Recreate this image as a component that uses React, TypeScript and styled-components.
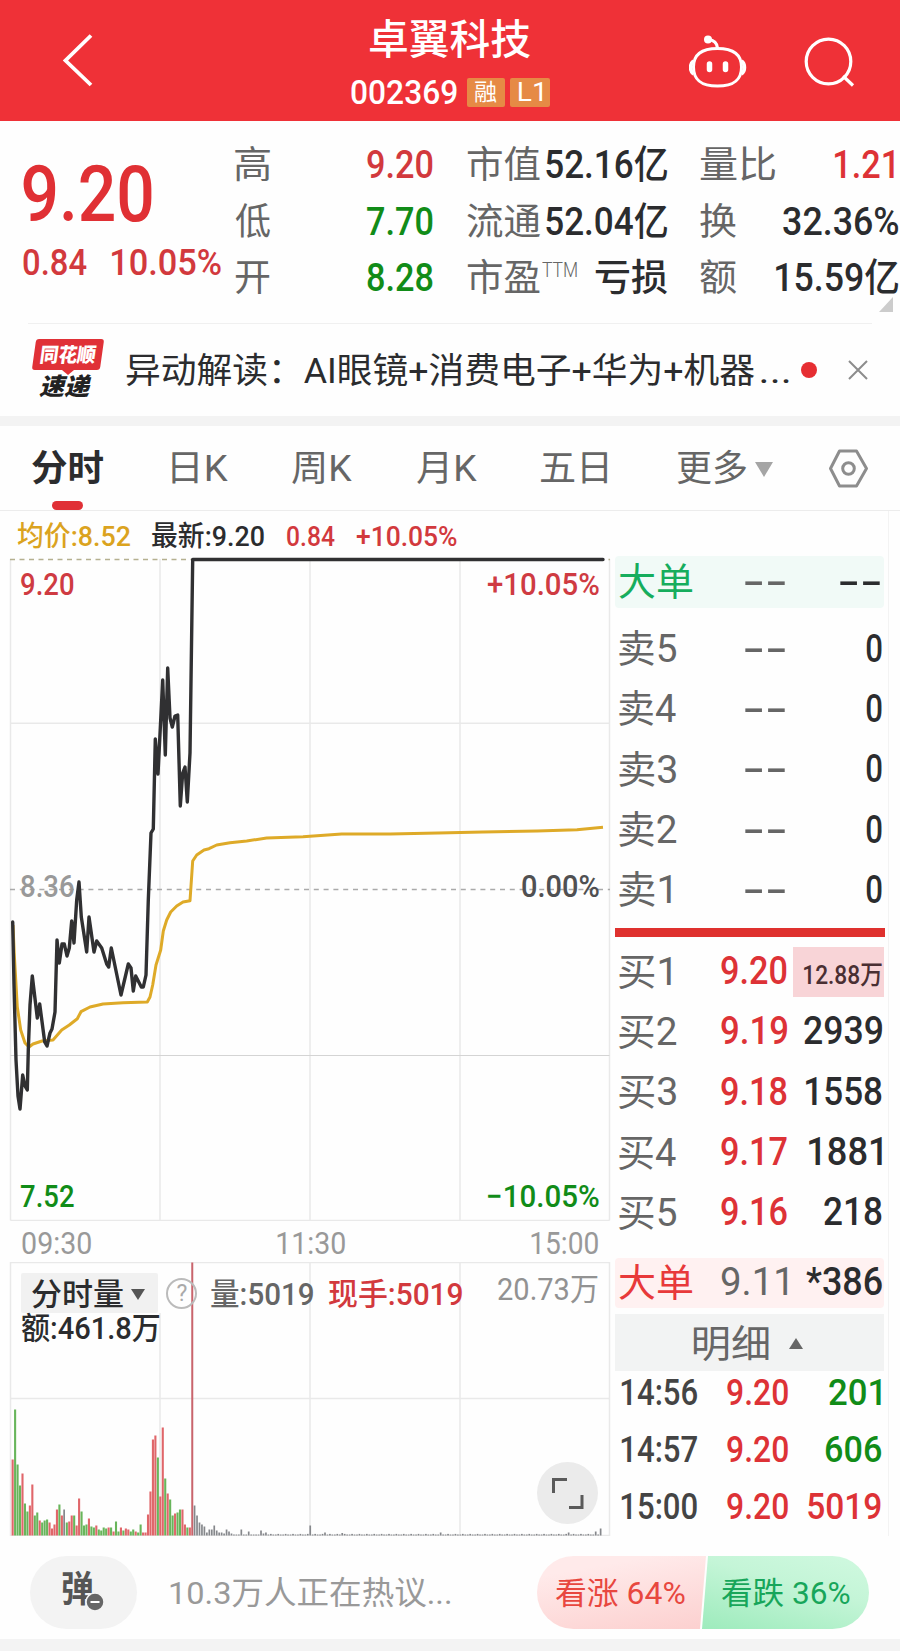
import React, { useLayoutEffect, useRef, useState } from 'react';
import styled, { createGlobalStyle } from 'styled-components';

const RED = '#dd3236';
const GREEN = '#118c18';
const DARK = '#2b2c2e';
const GREY = '#666';
const SOFT = '#999';

const GlobalStyle = createGlobalStyle`
  * { box-sizing: border-box; }
  body { margin: 0; background: #fff; }
`;

/* ---------- text that is condensed or widened to a given ink width ---------- */

const FitBox = styled.span<{ $w: number; $size: number; $weight: number; $color: string; $family?: string; $italic?: boolean }>`
  display: block;
  flex: none;
  width: ${p => p.$w}px;
  height: ${p => p.$size}px;
  line-height: ${p => p.$size}px;
  font-family: ${p => p.$family ?? "Roboto, 'Noto Sans CJK SC', sans-serif"};
  font-size: ${p => p.$size}px;
  font-weight: ${p => p.$weight};
  font-style: ${p => (p.$italic ? 'italic' : 'normal')};
  color: ${p => p.$color};
  white-space: nowrap;
`;

const FitInner = styled.span`
  display: inline-block;
  transform-origin: 0 50%;
`;

interface FitProps {
  children: string;
  w: number;
  size: number;
  weight?: number;
  color?: string;
  family?: string;
  italic?: boolean;
}

function Fit({ children, w, size, weight = 400, color = DARK, family, italic }: FitProps) {
  const ref = useRef<HTMLSpanElement>(null);
  const [transform, setTransform] = useState('none');
  useLayoutEffect(() => {
    const ctx = document.createElement('canvas').getContext('2d');
    if (!ctx || !ref.current) return;
    const cs = getComputedStyle(ref.current);
    ctx.font = `${cs.fontStyle} ${cs.fontWeight} ${cs.fontSize} ${cs.fontFamily}`;
    const m = ctx.measureText(children);
    const k = w / (m.actualBoundingBoxLeft + m.actualBoundingBoxRight);
    setTransform(`translateX(${m.actualBoundingBoxLeft * k}px) scaleX(${k})`);
  }, [children, w]);
  return (
    <FitBox $w={w} $size={size} $weight={weight} $color={color} $family={family} $italic={italic}>
      <FitInner ref={ref} style={{ transform }}>{children}</FitInner>
    </FitBox>
  );
}

const DashWrap = styled.span`
  display: block;
  padding: 0 2px 5px 0;
`;

const Dashes = ({ color = GREY }: { color?: string }) => (
  <DashWrap><Fit w={40} size={44} color={color} family="'DejaVu Sans', sans-serif">--</Fit></DashWrap>
);

/* ---------- header ---------- */

const Page = styled.main`
  width: 900px;
  height: 1651px;
  overflow: hidden;
  background: #fefefe;
  display: flex;
  flex-direction: column;
`;

const Header = styled.header`
  height: 121px;
  flex: none;
  background: #ef3137;
  display: grid;
  grid-template-columns: 350px 202px 137px 57px 75px 79px;
  align-items: start;
`;

const BackIcon = styled.svg`
  margin: 30px 0 0 60px;
`;
const TitleCol = styled.div`
  display: flex;
  flex-direction: column;
  padding-top: 20px;
`;
const TitleLine = styled.div`
  padding-left: 20px;
`;
const CodeLine = styled.div`
  display: flex;
  align-items: center;
  height: 28px;
  margin-top: 17px;
  padding-left: 1px;
`;
const Tag = styled.span<{ $w: number; $ml: number }>`
  width: ${p => p.$w}px;
  height: 29px;
  margin-left: ${p => p.$ml}px;
  border-radius: 2px;
  background: #e68a45;
  display: flex;
  align-items: center;
  justify-content: center;
`;

/* ---------- quote ---------- */

const Quote = styled.section`
  height: 202px;
  flex: none;
  display: flex;
  position: relative;
`;
const PriceCol = styled.div`
  width: 235px;
  padding: 35px 0 0 23px;
`;
const ChangeLine = styled.div`
  display: flex;
  gap: 25px;
  margin-top: 10px;
`;
const Metrics = styled.div<{ $w: number; $ml?: number }>`
  width: ${p => p.$w}px;
  margin-left: ${p => p.$ml ?? 0}px;
  padding-top: 16px;
  flex: none;
`;
const Metric = styled.div<{ $pr?: number }>`
  height: 56.7px;
  padding-right: ${p => p.$pr ?? 0}px;
  display: flex;
  align-items: center;
  justify-content: space-between;
`;
const LabelWrap = styled.span`
  display: flex;
  align-items: flex-start;
  gap: 2px;
`;
const Corner = styled.span`
  position: absolute;
  right: 7px;
  top: 176px;
  border-left: 14px solid transparent;
  border-bottom: 15px solid #ccc;
`;

/* ---------- news ---------- */

const News = styled.section`
  height: 93px;
  flex: none;
  margin: 0 28px;
  padding-left: 3px;
  border-top: 1px solid #f0f0f0;
  display: flex;
  align-items: center;
`;
const Logo = styled.div`
  width: 73px;
  height: 62px;
  display: flex;
  flex-direction: column;
  align-items: center;
`;
const LogoBubble = styled.div`
  width: 68px;
  height: 31px;
  background: #e03137;
  transform: skewX(-8deg);
  border-radius: 3px;
  display: flex;
  align-items: center;
  justify-content: center;
`;
const LogoTail = styled.i`
  border: 6px solid transparent;
  border-top: 5px solid #e03137;
  border-bottom: 0;
`;
const LogoCaption = styled.div`
  padding-right: 5px;
`;
const NewsText = styled.div`
  margin-left: 22px;
  padding-top: 2px;
  display: flex;
  gap: 6px;
`;
const Dot = styled.i`
  width: 16px;
  height: 16px;
  border-radius: 50%;
  background: #e62e32;
  margin: 0 31px 0 12px;
`;
const Band = styled.div<{ $h: number }>`
  height: ${p => p.$h}px;
  flex: none;
  background: #f3f3f3;
`;

/* ---------- tabs ---------- */

const Tabs = styled.nav`
  height: 85px;
  flex: none;
  border-bottom: 1px solid #ececec;
  display: flex;
  align-items: flex-start;
  padding-left: 32px;
`;
const Tab = styled.div<{ $ml?: number }>`
  height: 84px;
  padding-top: 25px;
  margin-left: ${p => p.$ml ?? 0}px;
  display: flex;
  flex-direction: column;
  align-items: center;
`;
const Underline = styled.i`
  width: 31px;
  height: 9px;
  margin-top: 14px;
  border-radius: 5px;
  background: #e03036;
`;
const Caret = styled.i<{ $w: number; $h: number; $color: string; $up?: boolean }>`
  flex: none;
  border-left: ${p => p.$w / 2}px solid transparent;
  border-right: ${p => p.$w / 2}px solid transparent;
  ${p => (p.$up ? 'border-bottom' : 'border-top')}: ${p => p.$h}px solid ${p => p.$color};
`;
const MoreTab = styled.div`
  height: 86px;
  margin-left: 70px;
  display: flex;
  align-items: center;
  gap: 9px;
`;
const HexIcon = styled.svg`
  margin: 21px 0 0 54px;
`;

/* ---------- body ---------- */

const Body = styled.section`
  height: 1025px;
  flex: none;
  display: flex;
`;
const Left = styled.div`
  width: 615px;
  flex: none;
`;
const Legend = styled.div`
  height: 46px;
  padding: 6px 0 0 17px;
  display: flex;
  align-items: center;
`;
const Gap = styled.i<{ $w: number }>`
  width: ${p => p.$w}px;
  flex: none;
`;
const ChartBox = styled.div<{ $h: number }>`
  position: relative;
  height: ${p => p.$h}px;
  svg { display: block; }
`;
const Mark = styled.div<{ $x: number; $y: number }>`
  position: absolute;
  left: ${p => p.$x}px;
  top: ${p => p.$y}px;
`;
const TimeAxis = styled.div`
  height: 41px;
  padding: 4px 17px 0 22px;
  display: flex;
  align-items: center;
  justify-content: space-between;
`;
const VolumeBar = styled.div`
  position: absolute;
  left: 21px;
  top: 11px;
  width: 577px;
  height: 40px;
  display: flex;
  align-items: center;
`;
const Picker = styled.div`
  width: 137px;
  height: 40px;
  padding: 2px 0 0 11px;
  background: #f1f1f1;
  border-radius: 2px;
  display: flex;
  align-items: center;
  gap: 8px;
  flex: none;
`;
const Help = styled.span`
  width: 31px;
  height: 31px;
  margin-left: 8px;
  border: 2px solid #bbb;
  border-radius: 50%;
  display: flex;
  align-items: center;
  justify-content: center;
`;
const VolumeTexts = styled.div`
  display: flex;
  gap: 16px;
  padding: 2px 0 0 14px;
`;
const Expand = styled.div`
  position: absolute;
  left: 537px;
  top: 200px;
  width: 61px;
  height: 62px;
  border-radius: 50%;
  background: #ebebeb;
  display: flex;
  align-items: center;
  justify-content: center;
`;

/* ---------- order book ---------- */

const Book = styled.aside`
  width: 274px;
  border-right: 1px solid #f3f3f3;
  padding-top: 45px;
`;
const BookRow = styled.div<{ $h: number; $bg?: string; $mt?: number }>`
  height: ${p => p.$h}px;
  width: 269px;
  margin-top: ${p => p.$mt ?? 0}px;
  padding-left: 4px;
  background: ${p => p.$bg ?? 'none'};
  border-radius: 4px;
  display: grid;
  grid-template-columns: 75px 93px 95px;
  align-items: center;
  justify-items: end;
  > :first-child { justify-self: start; }
`;
const TradeRow = styled(BookRow)`
  padding-left: 6px;
  grid-template-columns: 73px 94px 93px;
`;
const Divider = styled.div`
  width: 270px;
  height: 9px;
  margin: 8px 0 4px;
  background: #df312e;
`;
const BigQty = styled.div`
  width: 91px;
  height: 50px;
  margin-right: -2px;
  padding: 7px 2px 0 0;
  background: #f8d4d7;
  display: flex;
  align-items: center;
  justify-content: flex-end;
`;
const DetailHead = styled.div`
  width: 269px;
  height: 57px;
  margin-top: 6px;
  background: #f2f3f3;
  display: flex;
  align-items: center;
  padding: 3px 0 0 79px;
  gap: 20px;
`;

/* ---------- footer ---------- */

const Footer = styled.footer`
  height: 103px;
  flex: none;
  padding: 20px 0 0 30px;
  display: flex;
  align-items: flex-start;
`;
const Danmu = styled.div`
  position: relative;
  width: 107px;
  height: 73px;
  border-radius: 37px;
  background: #f3f3f3;
  padding: 16px 0 0 32px;
`;
const MinusBadge = styled.svg`
  position: absolute;
  left: 55px;
  top: 36px;
`;
const Hint = styled.div`
  margin: 21px 0 0 33px;
`;
const Votes = styled.div`
  width: 332px;
  height: 73px;
  margin-left: 87px;
  border-radius: 37px;
  overflow: hidden;
  display: flex;
`;
const Vote = styled.div<{ $up?: boolean }>`
  width: 169px;
  flex: none;
  margin-left: ${p => (p.$up ? 0 : -6)}px;
  padding: 2px 0 0 ${p => (p.$up ? 19 : 22)}px;
  display: flex;
  align-items: center;
  background: ${p => (p.$up
    ? 'linear-gradient(170deg, #ffeaea 20%, #fcd0cf 100%)'
    : 'linear-gradient(15deg, #9debbc 0%, #c4f5d7 60%, #d0f9e0 100%)')};
  clip-path: ${p => (p.$up
    ? 'polygon(0 0, 100% 0, calc(100% - 6px) 100%, 0 100%)'
    : 'polygon(8px 0, 100% 0, 100% 100%, 2px 100%)')};
`;

/* ---------- data ---------- */

const PRICE = [
  [12.7, 922], [14, 985], [16, 1060], [18, 1096], [20, 1109], [22.7, 1075], [25, 1086], [27.3, 1090], [28.3, 1050], [30, 1005], [32.3, 976],
  [37.3, 1018], [39.7, 1004], [44.7, 1042], [47, 1046], [50, 1033], [52, 1029], [55, 1012], [57, 940], [59.3, 963], [62, 944],
  [64.3, 944], [67, 956], [69.3, 948], [71.7, 921], [74, 943], [76.7, 900], [79, 882], [81.3, 917], [86.7, 952], [89, 917],
  [94, 952], [96.7, 941], [101.7, 948], [106.7, 964], [108.7, 967], [111.3, 948], [121, 995], [128.3, 964], [131, 968],
  [133.3, 991], [135.7, 976], [141.3, 987], [143.3, 987], [146, 975], [148.3, 900], [151, 833], [153.3, 829], [155.3, 739],
  [158, 774], [162.7, 680], [165.3, 755], [167.7, 668], [170, 718], [172.3, 727], [175, 716], [177.7, 715], [180.3, 806],
  [182.7, 773], [185, 767], [187.3, 802], [190, 753], [192.7, 559.5], [603, 559.5],
];
const AVERAGE = [
  [13, 925], [14.3, 955], [17.3, 1007], [20.7, 1030], [25, 1043], [29, 1047], [33, 1044], [42, 1041], [53, 1040], [61.7, 1030],
  [69.3, 1025], [77.3, 1018.7], [81, 1011.7], [90, 1007], [103, 1004], [123, 1002.7], [147.3, 1002], [150, 997], [152.7, 985],
  [156, 965], [160.7, 950], [163.3, 931], [166.7, 920], [170.7, 912], [176.7, 906], [183, 902], [190, 900.7], [192.7, 861],
  [196.7, 855], [204, 850], [209, 848.7], [216.7, 845], [230, 842.7], [246.7, 841], [266.7, 838], [303, 836.7], [341.7, 834],
  [390, 834], [438, 833], [483, 832], [537, 831], [577, 829.7], [603, 827.3],
];
const toPoints = (pts: number[][]) => pts.map(([x, y]) => `${x},${y - 557}`).join(' ');

const VOLUMES =
  'r76 g126 g71 g50 r62 g32 g24 r30 r51 g20 g23 r15 g13 g15 g16 r13 r7 r11 r26 g31 r20 k26 g13 r14 r20 g20 r10 r37 g24 g10 g11 r17 g9 g8 r10 g6 g5 g8 g7 r8 g8 r4 g14 g4 r8 g5 r7 r6 g4 g6 r4 g3 g11 r3 r3 r21 r44 r96 r100 g78 r39 r108 g57 r42 g36 g20 r22 g23 g26 r26 r11 g8 r8 r273 k30 k20 k13 k11 k9 k3 k6 k6 k10 k5 k3 k3 k2 k6 k4 k2 k1 k1 k1 k6 k1 k1 k4 k1 k1 k1 k1 k5 k2 k3 k1'
    .split(' ')
    .map(s => ({ tone: s[0], h: Number(s.slice(1)) }));
while (VOLUMES.length < 240) {
  const i = VOLUMES.length;
  const peaks: Record<number, number> = { 121: 10, 127: 3, 134: 2.5, 174: 3, 226: 3, 237: 4, 239: 7 };
  VOLUMES.push({ tone: 'k', h: peaks[i] ?? (i % 3 === 0 ? 1.6 : 1) });
}
const TONES: Record<string, string> = { r: '#e0666a', g: '#68b55b', k: '#85878b' };

const ASKS = ['5', '4', '3', '2', '1'];
const BIDS: [string, string, string, number][] = [
  ['2', '9.19', '2939', 78], ['3', '9.18', '1558', 76], ['4', '9.17', '1881', 73], ['5', '9.16', '218', 58],
];
const TRADES: [string, string, number, string][] = [
  ['14:56', '201', 52, GREEN], ['14:57', '606', 55, GREEN], ['15:00', '5019', 73, RED],
];

function PriceChart() {
  return (
    <ChartBox $h={664}>
      <svg width="615" height="664" viewBox="0 0 615 664" fill="none">
        <path d="M10.5 2V663.5M160 2V663.5M310 2V663.5M460 2V663.5M609.5 2V663.5M10.5 166.3H609.5M10.5 663.5H609.5" stroke="#e9e9e9" strokeWidth="1.5" />
        <path d="M10.5 498.5H609.5" stroke="#d4d4d4" />
        <path d="M10 2.5H610" stroke="#b5b090" strokeWidth="1.5" strokeDasharray="5 4.5" />
        <path d="M10 332.5H610" stroke="#aaa" strokeWidth="1.5" strokeDasharray="5 4.8" />
        <polyline points={toPoints(AVERAGE)} stroke="#deaa28" strokeWidth="3" strokeLinejoin="round" />
        <polyline points={toPoints(PRICE)} stroke="#303032" strokeWidth="3.4" strokeLinejoin="round" strokeLinecap="round" />
      </svg>
      <Mark $x={21} $y={12}><Fit w={53} size={31} weight={500} color="#cf3b42">9.20</Fit></Mark>
      <Mark $x={488} $y={12}><Fit w={111} size={31} weight={500} color="#cf3b42">+10.05%</Fit></Mark>
      <Mark $x={21} $y={314}><Fit w={53} size={31} weight={500} color={SOFT}>8.36</Fit></Mark>
      <Mark $x={522} $y={314}><Fit w={77} size={31} weight={500} color="#505052">0.00%</Fit></Mark>
      <Mark $x={21} $y={624}><Fit w={53} size={31} weight={500} color={GREEN}>7.52</Fit></Mark>
      <Mark $x={488} $y={624}><Fit w={111} size={31} weight={500} color={GREEN}>−10.05%</Fit></Mark>
    </ChartBox>
  );
}

function VolumeChart() {
  return (
    <ChartBox $h={274}>
      <VolumeBar>
        <Picker>
          <Fit w={91} size={31} weight={500}>分时量</Fit>
          <Caret $w={15} $h={11} $color="#555" />
        </Picker>
        <Help><Fit w={10} size={23} color="#aaa">?</Fit></Help>
        <VolumeTexts>
          <Fit w={102} size={31} weight={500} color={GREY}>量:5019</Fit>
          <Fit w={133} size={31} weight={500} color="#d2393d">现手:5019</Fit>
        </VolumeTexts>
      </VolumeBar>
      <Mark $x={498} $y={12}><Fit w={100} size={31} color="#929292">20.73万</Fit></Mark>
      <Mark $x={21} $y={51}><Fit w={139} size={31} weight={500}>额:461.8万</Fit></Mark>
      <svg width="615" height="274" viewBox="0 0 615 274" fill="none">
        <path d="M10.5 .5H609.5V273.500H10.5ZM160 51V273M310 .5V273M460 .5V273M10.5 136.5H609.5" stroke="#e9e9e9" strokeWidth="1.5" />
        {VOLUMES.map((v, i) => (
          <rect key={i} x={11.6 + i * 2.461} y={273.5 - v.h} width={i === 73 ? 2 : v.tone === 'k' ? 1.7 : 2.1} height={v.h} fill={i === 73 ? '#c9646c' : TONES[v.tone]} />
        ))}
      </svg>
      <Expand>
        <svg width="33" height="33" viewBox="0 0 33 33" fill="none" stroke="#5a5a5a" strokeWidth="3">
          <path d="M2.5 16V2.5H16M31 18V30.5H18" />
        </svg>
      </Expand>
    </ChartBox>
  );
}

function OrderBook() {
  return (
    <Book>
      <BookRow $h={52} $bg="#f1faf7">
        <Fit w={74} size={38} color="#16ad5d">大单</Fit>
        <Dashes />
        <Dashes color={DARK} />
      </BookRow>
      {ASKS.map((n, i) => (
        <BookRow key={n} $h={60.3} $mt={i === 0 ? 11 : 0}>
          <Fit w={n === '1' ? 52 : 57} size={38} color={GREY}>{`卖${n}`}</Fit>
          <Dashes />
          <Fit w={16} size={39} weight={500}>0</Fit>
        </BookRow>
      ))}
      <Divider />
      <BookRow $h={60.3}>
        <Fit w={52} size={38} color={GREY}>买1</Fit>
        <Fit w={66} size={39} weight={500} color={RED}>9.20</Fit>
        <BigQty><Fit w={78} size={26} weight={500} color="#4a2f33">12.88万</Fit></BigQty>
      </BookRow>
      {BIDS.map(([n, price, qty, w]) => (
        <BookRow key={n} $h={60.3}>
          <Fit w={57} size={38} color={GREY}>{`买${n}`}</Fit>
          <Fit w={66} size={39} weight={500} color={RED}>{price}</Fit>
          <Fit w={w} size={39} weight={500}>{qty}</Fit>
        </BookRow>
      ))}
      <BookRow $h={50} $mt={15} $bg="#fff1f1">
        <Fit w={74} size={38} color="#e8393a">大单</Fit>
        <Fit w={66} size={39} color={GREY}>9.11</Fit>
        <Fit w={76} size={39} weight={500}>*386</Fit>
      </BookRow>
      <DetailHead>
        <Fit w={75} size={38} color={GREY}>明细</Fit>
        <Caret $w={15} $h={11} $color="#666" $up />
      </DetailHead>
      {TRADES.map(([time, qty, w, color], i) => (
        <TradeRow key={time} $h={57} $mt={i === 0 ? -6 : 0}>
          <Fit w={76} size={36} weight={500} color="#444">{time}</Fit>
          <Fit w={61} size={36} weight={500} color={RED}>9.20</Fit>
          <Fit w={w} size={36} weight={500} color={color}>{qty}</Fit>
        </TradeRow>
      ))}
    </Book>
  );
}

export default function App() {
  return (
    <Page>
      <GlobalStyle />
      <Header>
        <BackIcon width="36" height="60" viewBox="0 0 36 60" fill="none" stroke="#fff" strokeWidth="3.8">
          <path d="M31 5.5L5.5 30.5L31 55" />
        </BackIcon>
        <TitleCol>
          <TitleLine><Fit w={160} size={41} weight={500} color="#fff">卓翼科技</Fit></TitleLine>
          <CodeLine>
            <Fit w={106} size={34} weight={500} color="#fff">002369</Fit>
            <Tag $w={38} $ml={10}><Fit w={22} size={23} color="#fff">融</Fit></Tag>
            <Tag $w={40} $ml={5}><Fit w={23} size={25} color="#fff">L1</Fit></Tag>
          </CodeLine>
        </TitleCol>
        <i />
        <svg width="58" height="90" viewBox="689 0 58 90" fill="none" stroke="#fff" strokeWidth="3">
          <path d="M717.5 48.500C732 48.500 741.500 54 741.500 67C741.500 80 734 86 717.500 86C701 86 693.500 80 693.500 67C693.500 54 703 48.500 717.500 48.500Z" />
          <path d="M693.500 61C689.500 64 689.500 71 693.500 74M741.500 61C745.500 64 745.500 71 741.500 74" strokeWidth="3.500" />
          <path d="M717.500 48C717 42.500 713 40 708.500 39.500" />
          <circle cx="708" cy="39.500" r="4" fill="#fff" stroke="none" />
          <path d="M709.500 64V69.500M725.500 64V69.500" strokeWidth="5.500" strokeLinecap="round" />
        </svg>
        <svg width="118" height="95" viewBox="746 0 118 95" fill="none" stroke="#fff" strokeWidth="3.200">
          <circle cx="828.5" cy="61.500" r="22.300" />
          <path d="M843 76L853 85.500" />
        </svg>
      </Header>

      <Quote>
        <PriceCol>
          <Fit w={129} size={78} weight={500} color="#e03034">9.20</Fit>
          <ChangeLine>
            <Fit w={64} size={37} weight={500} color="#d2393d">0.84</Fit>
            <Fit w={109} size={37} weight={500} color="#d2393d">10.05%</Fit>
          </ChangeLine>
        </PriceCol>
        <Metrics $w={198}>
          {[['高', '9.20', '#d2393d'], ['低', '7.70', GREEN], ['开', '8.28', GREEN]].map(([label, value, color]) => (
            <Metric key={label}>
              <Fit w={35} size={37} color={GREY}>{label}</Fit>
              <Fit w={66} size={39} weight={500} color={color}>{value}</Fit>
            </Metric>
          ))}
        </Metrics>
        <Metrics $w={200} $ml={34}>
          <Metric>
            <Fit w={73} size={37} color={GREY}>市值</Fit>
            <Fit w={121} size={39} weight={500}>52.16亿</Fit>
          </Metric>
          <Metric>
            <Fit w={73} size={37} color={GREY}>流通</Fit>
            <Fit w={121} size={39} weight={500}>52.04亿</Fit>
          </Metric>
          <Metric>
            <LabelWrap>
              <Fit w={73} size={37} color={GREY}>市盈</Fit>
              <Fit w={35} size={20} weight={300} color={GREY}>TTM</Fit>
            </LabelWrap>
            <Fit w={72} size={37} weight={500}>亏损</Fit>
          </Metric>
        </Metrics>
        <Metrics $w={199} $ml={33}>
          <Metric $pr={5}>
            <Fit w={75} size={37} color={GREY}>量比</Fit>
            <Fit w={59} size={39} weight={500} color={RED}>1.21</Fit>
          </Metric>
          <Metric $pr={1}>
            <Fit w={36} size={37} color={GREY}>换</Fit>
            <Fit w={115} size={39} weight={500}>32.36%</Fit>
          </Metric>
          <Metric $pr={1}>
            <Fit w={36} size={37} color={GREY}>额</Fit>
            <Fit w={122} size={39} weight={500}>15.59亿</Fit>
          </Metric>
        </Metrics>
        <Corner />
      </Quote>

      <News>
        <Logo>
          <LogoBubble><Fit w={55} size={20} weight={900} color="#fff">同花顺</Fit></LogoBubble>
          <LogoTail />
          <LogoCaption><Fit w={53} size={24} weight={900} color="#222" italic>速递</Fit></LogoCaption>
        </Logo>
        <NewsText>
          <Fit w={629} size={35}>异动解读：AI眼镜+消费电子+华为+机器</Fit>
          <Fit w={28} size={35}>...</Fit>
        </NewsText>
        <Dot />
        <svg width="20" height="20" viewBox="0 0 20 20" stroke="#8c8c8c" strokeWidth="2">
          <path d="M1 1L19 19M19 1L1 19" />
        </svg>
      </News>
      <Band $h={10} />

      <Tabs>
        <Tab><Fit w={71} size={36} weight={700}>分时</Fit><Underline /></Tab>
        <Tab $ml={69}><Fit w={56} size={36} color={GREY}>日K</Fit></Tab>
        <Tab $ml={64}><Fit w={60} size={36} color={GREY}>周K</Fit></Tab>
        <Tab $ml={65}><Fit w={60} size={36} color={GREY}>月K</Fit></Tab>
        <Tab $ml={64}><Fit w={66} size={36} color={GREY}>五日</Fit></Tab>
        <MoreTab>
          <Fit w={69} size={36} color={GREY}>更多</Fit>
          <Caret $w={18} $h={15} $color="#a5a5a5" />
        </MoreTab>
        <HexIcon width="43" height="43" viewBox="0 0 43 43" fill="none" stroke="#8d8d8d" strokeWidth="3" strokeLinejoin="round">
          <path d="M12.500 4H29.500L39.500 21.500L29.500 39H12.500L3.500 21.500Z" />
          <circle cx="21.500" cy="21.500" r="5.800" />
        </HexIcon>
      </Tabs>

      <Body>
        <Left>
          <Legend>
            <Fit w={113} size={28} color="#dba31f" weight={500}>均价:8.52</Fit>
            <Gap $w={22} />
            <Fit w={112} size={28} weight={500}>最新:9.20</Fit>
            <Gap $w={23} />
            <Fit w={48} size={28} weight={500} color="#d2393d">0.84</Fit>
            <Gap $w={21} />
            <Fit w={101} size={28} weight={500} color="#d2393d">+10.05%</Fit>
          </Legend>
          <PriceChart />
          <TimeAxis>
            <Fit w={69} size={31} color={SOFT}>09:30</Fit>
            <Fit w={68} size={31} color={SOFT}>11:30</Fit>
            <Fit w={67} size={31} color={SOFT}>15:00</Fit>
          </TimeAxis>
          <VolumeChart />
        </Left>
        <OrderBook />
      </Body>

      <Footer>
        <Danmu>
          <Fit w={31} size={36} weight={700} color="#555">弹</Fit>
          <MinusBadge width="20" height="20" viewBox="0 0 20 20">
            <circle cx="10" cy="10" r="9" fill="#666" stroke="#f3f3f3" strokeWidth="1.500" />
            <path d="M5.500 10H14.500" stroke="#fff" strokeWidth="2" />
          </MinusBadge>
        </Danmu>
        <Hint><Fit w={280} size={32} color={SOFT}>10.3万人正在热议...</Fit></Hint>
        <Votes>
          <Vote $up><Fit w={129} size={31} color="#e8473f">看涨 64%</Fit></Vote>
          <Vote><Fit w={128} size={31} color="#17a65a">看跌 36%</Fit></Vote>
        </Votes>
      </Footer>
      <Band $h={12} />
    </Page>
  );
}
